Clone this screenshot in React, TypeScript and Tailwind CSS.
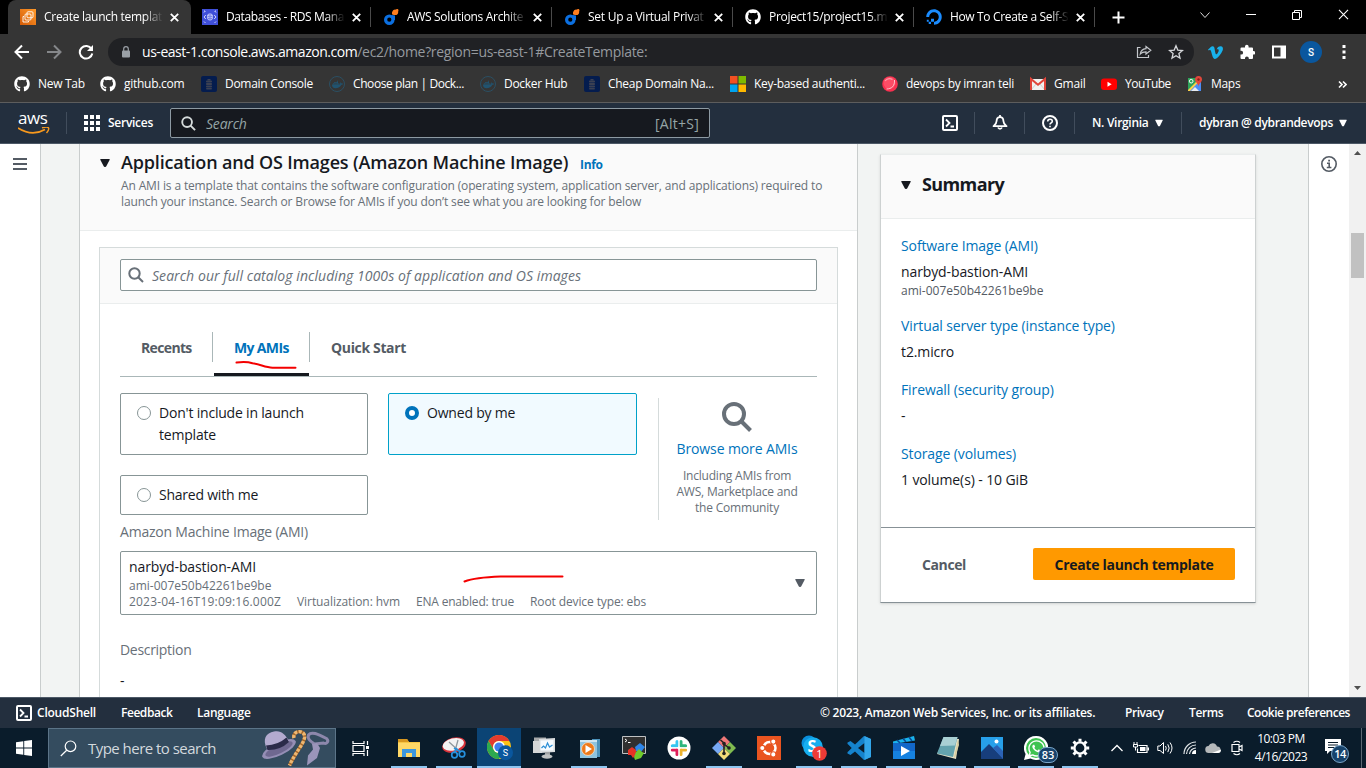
import React from 'react';
import { FaGithub, FaVimeoV, FaDocker, FaDigitalOcean, FaWhatsapp } from 'react-icons/fa';

const Svg = ({ s = 16, vb = '0 0 16 16', children, className = '' }: { s?: number; vb?: string; children: React.ReactNode; className?: string }) => (
  <svg width={s} height={s} viewBox={vb} fill="none" className={`shrink-0 ${className}`}>{children}</svg>
);

/* ---------- favicons ---------- */
const Ec2Icon = () => (
  <Svg>
    <defs><linearGradient id="ec2" x1="0" y1="1" x2="1" y2="0"><stop stopColor="#d45b07" /><stop offset="1" stopColor="#ff9a2b" /></linearGradient></defs>
    <rect width="16" height="16" fill="url(#ec2)" />
    <g stroke="#fff" strokeWidth=".9"><rect x="7" y="2.800" width="6" height="6" rx="1" /><rect x="5" y="5" width="6" height="6" rx="1" /><path d="M4 7.500H3v5.500h5.500v-1" /></g>
  </Svg>
);
const RdsIcon = () => (
  <Svg>
    <rect width="16" height="16" fill="#3f4fd8" />
    <g stroke="#dfe3ff" strokeWidth=".9"><path d="M2 3.500 3.500 2M2 2h1M12.500 2 14 3.500M13 2h1M14 12.500 12.500 14M3.500 14 2 12.500" /><path d="M3.800 6 2 8l1.800 2M12.200 6 14 8l-1.800 2" /><ellipse cx="8" cy="6" rx="2.200" ry="1" /><path d="M5.800 6v4c0 1.300 4.400 1.300 4.400 0V6M5.800 8c0 1.300 4.400 1.300 4.400 0" /></g>
  </Svg>
);
const DIcon = () => (
  <Svg><circle cx="6.300" cy="10.700" r="3.700" stroke="#0b6fe0" strokeWidth="3.200" /><path d="M8.500 6 12 6.500v4.500h-3z" fill="#0b6fe0" /><circle cx="12.300" cy="3.200" r="2.800" fill="#ff7f1f" /><rect x="9" y="2.500" width="3" height="3.300" rx="1" fill="#ff7f1f" /><rect x="13" y="0" width="2.400" height="3" rx="1" fill="#ff7f1f" /></Svg>
);
const ServerIcon = () => (
  <Svg><rect width="16" height="16" rx="2" fill="#041c4e" /><g fill="#3b4052"><rect x="6.500" y="3" width="3" height="1.500" /><rect x="5" y="4.500" width="6" height="2" rx=".8" /><rect x="5" y="7" width="6" height="2" rx=".8" /><rect x="5" y="9.500" width="6" height="2" rx=".8" /><rect x="5" y="12" width="6" height="1.600" rx=".8" /></g></Svg>
);
const DockerIcon = () => (
  <span className="flex size-4 shrink-0 items-center justify-center rounded-full border border-[#2b4f63] text-[#21536f]"><FaDocker size={11} /></span>
);
const MsIcon = () => (
  <Svg><path d="M0 0h7.500v7.500H0z" fill="#f25022" /><path d="M8.500 0H16v7.500H8.500z" fill="#7fba00" /><path d="M0 8.500h7.500V16H0z" fill="#00a4ef" /><path d="M8.500 8.500H16V16H8.500z" fill="#ffb900" /></Svg>
);
const BallIcon = () => (
  <Svg><circle cx="8" cy="8" r="7.800" fill="#f8304f" /><circle cx="7.500" cy="7" r="6" fill="#fb4d66" /><path d="M4.500 13c5 0 8.500-3 8-9" stroke="#ffc2c9" strokeWidth="1" /><path d="M3 5c2-2.500 5-3 7.500-1.500" stroke="#ff9aa7" strokeWidth="1.200" /></Svg>
);
const GmailIcon = () => (
  <Svg><path d="M1 3h14v11H1z" fill="#f1f1f1" /><path d="m1 14 5-6M15 14l-5-6" stroke="#cfcfcf" /><path d="M1 14V3l7 5.800L15 3v11" stroke="#e0443a" strokeWidth="2" /></Svg>
);
const YtIcon = () => (
  <Svg><rect y="2.500" width="16" height="11.500" rx="3" fill="#f00" /><path d="M6.500 5.700v5L10.700 8.200z" fill="#fff" /></Svg>
);
const MapsIcon = () => (
  <Svg><rect x="1" y="2" width="13" height="13" fill="#2fa35a" /><path d="M1 15 14 3v12z" fill="#4c8df6" /><path d="m1 14 11-11 1.500 1L3 15H1z" fill="#fbd24a" /><path d="m4 15 4-4 4 4z" fill="#e8eaed" /><circle cx="4.200" cy="5.200" r="1.800" stroke="#fff" /><path d="M11.500 0a3.500 3.500 0 0 1 3.500 3.500c0 2.500-3 3.500-3.500 7-.5-3.500-3.500-4.500-3.500-7A3.500 3.500 0 0 1 11.500 0z" fill="#e1483c" /><circle cx="11.500" cy="3.500" r="1.200" fill="#8c1f18" /></Svg>
);

const tabs = [
  { icon: <Ec2Icon />, t: 'Create launch templat', active: true, tr: 'tracking-[-0.29px]' },
  { icon: <RdsIcon />, t: 'Databases - RDS Mana', sep: true, tr: 'tracking-[-0.4px]' },
  { icon: <DIcon />, t: 'AWS Solutions Archite', sep: true, tr: 'tracking-[-0.32px]' },
  { icon: <DIcon />, t: 'Set Up a Virtual Privat', sep: true, tr: 'tracking-[-0.25px]' },
  { icon: <FaGithub size={16} />, t: 'Project15/project15.m', sep: true, tr: 'tracking-[-0.3px]' },
  { icon: <FaDigitalOcean size={16} className="text-[#1a8cff]" />, t: 'How To Create a Self-S', sep: true, tr: 'tracking-[-0.35px]' },
];

const X = ({ s = 9, w = 1.8 }: { s?: number; w?: number }) => <Svg s={s} vb="0 0 9 9"><path d="m.8.8 7.400 7.400M8.200.8.8 8.200" stroke="#fff" strokeWidth={w} /></Svg>;

function TabStrip() {
  return (
    <div className="flex h-[34px] bg-black pl-2 text-white">
      {tabs.map((tb, i) => (
        <div key={i} className={`flex h-full shrink-0 items-center ${i === 0 ? 'w-[183px] rounded-t-lg bg-[#353535] pl-3' : 'w-[181px] pl-[11px]'}`}>
          <span className="flex size-4 items-center">{tb.icon}</span>
          <span className={`ml-2 w-[119px] whitespace-nowrap text-[12px] leading-4 [mask-image:linear-gradient(to_right,#000_84%,transparent)] ${tb.tr}`}>{tb.t}</span>
          <span className="ml-[7px] w-[9px]"><X /></span>
          {tb.sep && <span className="ml-auto mr-px h-5 w-px bg-[#4a4a4a]" />}
        </div>
      ))}
      <div className="flex w-[45px] items-center justify-center"><Svg s={13} vb="0 0 13 13"><path d="M6.500.5v12M.5 6.500h12" stroke="#fff" strokeWidth="2" /></Svg></div>
      <div className="ml-auto flex h-[29px] w-[184px] items-center">
        <span className="flex w-[46px] justify-center"><Svg s={10} vb="0 0 10 10"><path d="m.5 2.500 4.500 5 4.500-5" stroke="#ddd" /></Svg></span>
        <span className="flex w-[46px] justify-center"><span className="h-px w-[10px] bg-white" /></span>
        <span className="flex w-[46px] justify-center"><Svg s={10} vb="0 0 10 10"><path d="M.5 2.500h7v7h-7zM2.500 2.500v-2h7v7h-2" stroke="#fff" /></Svg></span>
        <span className="flex w-[46px] justify-center"><X s={11} w={0.9} /></span>
      </div>
    </div>
  );
}

function Toolbar() {
  return (
    <div className="flex h-9 items-center bg-[#353535] text-white">
      <div className="ml-[14px] flex w-[94px] items-center">
        <Svg s={16}><path d="M15 8H2M8 1.500 1.500 8 8 14.500" stroke="#fff" strokeWidth="2" /></Svg>
        <Svg s={16} className="ml-4"><path d="M1 8h13M8 1.500 14.500 8 8 14.500" stroke="#85878a" strokeWidth="2" /></Svg>
        <Svg s={16} className="ml-4"><path d="M13.500 5A6.300 6.300 0 1 0 14.300 9.500" stroke="#fff" strokeWidth="2" /><path d="M15 1v6H9z" fill="#fff" /></Svg>
      </div>
      <div className="flex h-7 w-[1086px] items-center rounded-full bg-[#202124] pl-3 pr-[10px]">
        <Svg s={12} vb="0 0 12 12"><rect x="2" y="4.500" width="8" height="7" rx="1" fill="#9aa0a6" /><path d="M3.700 5V3a2.300 2.300 0 0 1 4.600 0v2" stroke="#9aa0a6" strokeWidth="1.200" /></Svg>
        <span className="ml-[10px] whitespace-nowrap text-[14px] leading-5"><span className="tracking-[-0.46px]">us-east-1.console.aws.amazon.com</span><span className="tracking-[-0.31px] text-[#969a9f]">/ec2/home?region=us-east-1#CreateTemplate:</span></span>
        <Svg s={16} className="ml-auto"><path d="M4.500 3.500H1.500v10h11v-2.500" stroke="#c4c7cb" strokeWidth="1.200" /><path d="M10 2.500 14.800 6.300 10 10V7.800c-3 0-4.500.7-5.700 2.200.4-3 2.200-5 5.700-5.300z" stroke="#c4c7cb" strokeWidth="1.200" /></Svg>
        <Svg s={16} className="ml-4"><path d="m8 1.800 1.800 4.300 4.700.4-3.600 3 1.100 4.600L8 11.700l-4 2.400 1.100-4.600-3.600-3 4.700-.4z" stroke="#d5d7da" strokeWidth="1.300" /></Svg>
      </div>
      <FaVimeoV size={17} className="ml-[13px] text-[#19b1ea]" />
      <Svg s={16} className="ml-[15px]"><path d="M6 2.500a1.800 1.800 0 0 1 3.600 0V3.500h3.400a1 1 0 0 1 1 1V7h.5a1.800 1.800 0 0 1 0 3.600H14V14a1 1 0 0 1-1 1H9.800v-.7a1.900 1.900 0 0 0-3.800 0v.7H2.500a1 1 0 0 1-1-1v-3.400h.7a1.900 1.900 0 0 0 0-3.800h-.7V4.500a1 1 0 0 1 1-1H6z" fill="#fff" /></Svg>
      <Svg s={16} className="ml-4"><path d="M2 2.500h12v11H2z" stroke="#fff" strokeWidth="2" /><path d="M9.500 2h5v12h-5z" fill="#fff" /></Svg>
      <span className="ml-[13px] flex size-[22px] items-center justify-center rounded-full bg-[#0a579e] font-[Roboto] text-[10px] font-medium">S</span>
      <Svg s={4} vb="0 0 4 14" className="ml-5 h-[14px]!"><g fill="#fff"><rect x=".5" y="0" width="3" height="3" /><rect x=".5" y="5.500" width="3" height="3" /><rect x=".5" y="11" width="3" height="3" /></g></Svg>
    </div>
  );
}

const marks = [
  { i: <FaGithub size={16} />, t: 'New Tab', w: 'w-[86px]', tr: 'tracking-[-0.3px]' },
  { i: <FaGithub size={16} />, t: 'github.com', w: 'w-[101px]', tr: 'tracking-[-0.28px]' },
  { i: <ServerIcon />, t: 'Domain Console', w: 'w-[128px]', tr: 'tracking-[-0.29px]' },
  { i: <DockerIcon />, t: 'Choose plan | Dock...', w: 'w-[151px]', tr: 'tracking-[-0.41px]' },
  { i: <DockerIcon />, t: 'Docker Hub', w: 'w-[104px]', tr: 'tracking-[-0.3px]' },
  { i: <ServerIcon />, t: 'Cheap Domain Na...', w: 'w-[146px]', tr: 'tracking-[-0.29px]' },
  { i: <MsIcon />, t: 'Key-based authenti...', w: 'w-[152px]', tr: 'tracking-[-0.31px]' },
  { i: <BallIcon />, t: 'devops by imran teli', w: 'w-[148px]', tr: 'tracking-[-0.26px]' },
  { i: <GmailIcon />, t: 'Gmail', w: 'w-[71px]', tr: 'tracking-[-0.2px]' },
  { i: <YtIcon />, t: 'YouTube', w: 'w-[86px]', tr: 'tracking-[-0.5px]' },
  { i: <MapsIcon />, t: 'Maps', w: 'w-[60px]', tr: 'tracking-[-0.3px]' },
];

function Bookmarks() {
  return (
    <div className="flex h-[33px] border-b border-[#5d5d5d] bg-[#353535] pl-[14px] text-[12px] text-white">
      {marks.map((m, i) => (
        <div key={i} className={`flex h-7 shrink-0 items-center gap-2 ${m.w}`}>{m.i}<span className={`whitespace-nowrap ${m.tr}`}>{m.t}</span></div>
      ))}
      <Svg s={9} vb="0 0 9 9" className="ml-auto mr-[19px] mt-[10px]"><path d="m1 1.500 3 3-3 3M5 1.500l3 3-3 3" stroke="#fff" strokeWidth="1.600" /></Svg>
    </div>
  );
}

const ShellIcon = () => <Svg s={16}><rect x="1" y="1" width="14" height="14" rx="1" stroke="#fff" strokeWidth="2" /><path d="m4 4.500 3.500 3.500L4 11.500M8.500 11.500H12" stroke="#fff" strokeWidth="1.800" /></Svg>;
const Bar = () => <span className="block h-[22px] w-px bg-[#414d5c]" />;
const Caret = ({ className = '' }: { className?: string }) => <Svg s={10} vb="0 0 10 8" className={className}><path d="M.8 0h8.400q.8 0 .5.700L6.300 7.300Q6 8 5.200 8h-.4q-.8 0-1.100-.7L.3.700Q0 0 .8 0z" fill="currentColor" /></Svg>;
const Mag = ({ s, c }: { s: number; c: string }) => <Svg s={s}><circle cx="6.500" cy="6.500" r="5.200" stroke={c} strokeWidth="2" /><path d="m10.200 10.200 4.800 4.800" stroke={c} strokeWidth="2" /></Svg>;

function AwsNav() {
  return (
    <div className="flex h-[41px] items-center border-b border-[#4c5866] bg-[#232f3e] text-white">
      <div className="ml-[18px] flex w-12 flex-col">
        <span className="h-[15px] text-[17px] font-medium leading-[12px] tracking-[-0.4px]">aws</span>
        <svg width="32" height="8" viewBox="0 0 32 8" fill="none"><path d="M0 1q14 9 27 1.500" stroke="#f8991d" strokeWidth="1.800" /><path d="M24 .8c3-.8 6-.8 6.500 0s-.5 3.500-2 5.200" stroke="#f8991d" strokeWidth="1.400" /></svg>
      </div>
      <Bar />
      <svg width="16" height="16" viewBox="0 0 16 16" className="ml-[17px]" fill="#fff">{[0, 6, 12].map(y => [0, 6, 12].map(x => <rect key={`${x}-${y}`} x={x} y={y} width="4" height="4" />))}</svg>
      <span className="ml-2 w-[62px] text-[12px] font-semibold tracking-[-0.27px]">Services</span>
      <div className="flex h-[30px] w-[540px] items-center rounded-[2px] border border-[#8d9aa3] bg-[#16191f] pl-[10px] pr-[10px] text-[14px] text-[#95a5a6]">
        <Mag s={15} c="#d5dbdb" />
        <span className="ml-[10px] italic tracking-[-0.2px]">Search</span>
        <span className="ml-auto tracking-[0.25px]">[Alt+S]</span>
      </div>
      <div className="ml-[232px] flex items-center">
        <ShellIcon />
        <span className="ml-4"><Bar /></span>
        <Svg s={16} className="ml-[17px]"><path d="M8 0v2" stroke="#fff" strokeWidth="1.800" /><path d="M8 2.200C5.600 2.200 4.600 4 4.600 6 4.600 8.500 3 9.800 1.500 11.200h13C13 9.800 11.400 8.500 11.400 6c0-2-1-3.800-3.400-3.800zM6 12.500a2.200 2.200 0 0 0 4 0" stroke="#fff" strokeWidth="1.800" strokeLinejoin="round" /></Svg>
        <span className="ml-4"><Bar /></span>
        <Svg s={16} className="ml-[17px]"><circle cx="8" cy="8" r="7" stroke="#fff" strokeWidth="2" /><path d="M5.700 6.500C5.700 3.500 10.300 3.500 10.300 6.300 10.300 8 8 7.800 8 9.600M8 10.700v1.600" stroke="#fff" strokeWidth="1.600" /></Svg>
        <span className="ml-4"><Bar /></span>
        <span className="ml-[17px] w-[57px] whitespace-nowrap text-[12px] font-semibold tracking-[-0.3px]">N. Virginia</span>
        <Caret className="ml-[6px] w-2!" />
        <span className="ml-[18px]"><Bar /></span>
        <span className="ml-[17px] w-[134px] whitespace-nowrap text-[12px] font-semibold tracking-[-0.32px]">dybran @ dybrandevops</span>
        <Caret className="ml-[6px] w-2!" />
      </div>
    </div>
  );
}

const Radio = ({ on }: { on?: boolean }) => on
  ? <span className="mt-1 size-[14px] shrink-0 rounded-full border-[4px] border-[#0073bb] bg-white" />
  : <span className="mt-1 size-[14px] shrink-0 rounded-full border border-[#879596] bg-white" />;

function ImagesCard() {
  return (
    <section className="relative h-[553px] w-[779px] overflow-hidden border-x border-[#c9cdcd] bg-white">
      <header className="flex h-[87px] border-b border-[#eaeded] bg-[#fafafa] pl-5">
        <Caret className="mt-[14px] w-[10px]! text-[#16191f]" />
        <div className="ml-[11px]">
          <div className="flex items-baseline pt-[6px] leading-6">
            <h2 className="w-[459px] whitespace-nowrap text-[18px] font-semibold tracking-[-0.17px] text-[#16191f]">Application and OS Images (Amazon Machine Image)</h2>
            <span className="text-[12px] font-bold tracking-[-0.3px] text-[#0073bb]">Info</span>
          </div>
          <p className="mt-px whitespace-nowrap text-[12px] leading-4 tracking-[-0.14px] text-[#687078]">An AMI is a template that contains the software configuration (operating system, application server, and applications) required to<br />launch your instance. Search or Browse for AMIs if you don’t see what you are looking for below</p>
        </div>
      </header>
      <div className="ml-[19px] mt-4 w-[739px] border border-[#d5dbdb] text-[14px]">
        <div className="h-14 border-b border-[#eaeded] bg-[#fafafa] px-5 pt-[11px]">
          <div className="flex h-8 items-center rounded-[2px] border border-[#879596] bg-white pl-[7px]">
            <Mag s={16} c="#687078" />
            <span className="ml-2 italic tracking-[0.06px] text-[#687078]">Search our full catalog including 1000s of application and OS images</span>
          </div>
        </div>
        <div className="h-[420px] px-5">
          <div className="flex h-[73px] items-end border-b border-[#aab7b8] font-bold text-[#545b64]">
            <span className="flex h-[44px] w-[93px] items-start border-[#aab7b8] pl-[21px]"><span className="mt-[6px] leading-5 tracking-[-0.65px]">Recents</span><span className="ml-auto h-[30px] w-px bg-[#aab7b8]" /></span>
            <span className="ml-px flex h-[44px] w-[95px] border-b-[3px] border-[#16191f] pl-5 text-[#0073bb]"><span className="mt-[6px] whitespace-nowrap leading-5 tracking-[-0.65px]">My AMIs</span></span>
            <span className="flex h-[44px] items-start"><span className="h-[30px] w-px bg-[#aab7b8]" /><span className="ml-[21px] mt-[6px] leading-5 tracking-[-0.35px]">Quick Start</span></span>
          </div>
          <div className="mt-4 flex text-[#16191f]">
            <div className="grid w-[517px] grid-cols-[248px_249px] grid-rows-[62px_40px] gap-5 leading-[22px]">
              <div className="flex gap-2 rounded-[2px] border border-[#879596] pl-4 pt-2"><Radio /><span className="w-[170px] tracking-[-0.2px]">Don't include in launch template</span></div>
              <div className="flex gap-2 rounded-[2px] border border-[#00a1c9] bg-[#f1faff] pl-4 pt-2"><Radio on /><span className="tracking-[-0.2px]">Owned by me</span></div>
              <div className="flex gap-2 rounded-[2px] border border-[#879596] pl-4 pt-2"><Radio /><span className="tracking-[-0.23px]">Shared with me</span></div>
            </div>
            <div className="ml-[21px] mt-[5px] flex h-[122px] w-[157px] flex-col items-center border-l border-[#d5dbdb] pt-1">
              <svg width="30" height="30" viewBox="0 0 30 30" fill="none"><circle cx="12" cy="12" r="10" stroke="#687078" strokeWidth="4" /><path d="m19 19 9.500 9.500" stroke="#687078" strokeWidth="4" /></svg>
              <span className="mt-[6px] leading-[22px] tracking-[-0.12px] text-[#0073bb]">Browse more AMIs</span>
              <span className="mt-2 w-[130px] text-center text-[12px] leading-4 tracking-[-0.2px] text-[#687078]">Including AMIs from AWS, Marketplace and the Community</span>
            </div>
          </div>
          <div className="mt-[1px] leading-[22px] tracking-[-0.21px] text-[#687078]">Amazon Machine Image (AMI)</div>
          <div className="mt-2 flex h-16 items-center rounded-[2px] border border-[#879596] pl-2 pr-[11px]">
            <div>
              <div className="leading-[22px] tracking-[-0.12px] text-[#16191f]">narbyd-bastion-AMI</div>
              <div className="text-[12px] leading-4 text-[#687078]">ami-007e50b42261be9be</div>
              <div className="flex gap-4 whitespace-nowrap text-[12px] leading-4 text-[#687078]">
                <span className="w-[152px] tracking-[0.2px]">2023-04-16T19:09:16.000Z</span><span className="w-[103px] tracking-[-0.07px]">Virtualization: hvm</span><span className="w-[98px] tracking-[-0.19px]">ENA enabled: true</span><span className="tracking-[-0.11px]">Root device type: ebs</span>
              </div>
            </div>
            <Caret className="ml-auto text-[#545b64]" />
          </div>
          <div className="mt-6 leading-[22px] tracking-[-0.3px] text-[#687078]">Description</div>
          <div className="mt-[9px] leading-[22px] text-[#16191f]">-</div>
        </div>
      </div>
      {/* pen marks */}
      <svg className="absolute left-0 top-0" width="777" height="553" fill="none" stroke="#f40000" strokeWidth="2" strokeLinecap="round"><path d="M156.500 218.500c6-.8 12-.6 16 .8 8 1.200 13 4.200 20 4.400h23" /><path d="M384.500 437.500c9-3.500 22-4.500 36-5h62" /></svg>
    </section>
  );
}

const summary = [
  { l: 'Software Image (AMI)', v: 'narbyd-bastion-AMI', s: 'ami-007e50b42261be9be' },
  { l: 'Virtual server type (instance type)', v: 't2.micro' },
  { l: 'Firewall (security group)', v: '-' },
  { l: 'Storage (volumes)', v: '1 volume(s) - 10 GiB' },
];

function Summary() {
  return (
    <aside className="ml-[22px] mt-[10px] h-[449px] w-[376px] border border-t-[#eaeded] border-x-[#cdd1d1] border-b-[#879196] bg-white text-[14px] shadow-sm">
      <header className="flex h-[64px] items-center border-b border-[#eaeded] bg-[#fafafa] pl-5 pb-1">
        <Caret className="w-[10px]! text-[#16191f]" /><h2 className="ml-[11px] text-[18px] font-bold tracking-[-0.6px] text-[#16191f]">Summary</h2>
      </header>
      <div className="h-[309px] border-b border-[#879196] px-5 pt-4 leading-[22px] tracking-[-0.11px]">
        {summary.map(x => (
          <div key={x.l} className="mb-4">
            <div className="text-[#0073bb]">{x.l}</div>
            <div className="mt-1 text-[#16191f]">{x.v}</div>
            {x.s && <div className="text-[12px] leading-4 tracking-normal text-[#545b64]">{x.s}</div>}
          </div>
        ))}
      </div>
      <div className="flex h-[72px] items-center justify-between pl-[41px] pr-[20px] font-bold">
        <span className="tracking-[-0.39px] text-[#545b64]">Cancel</span>
        <span className="flex h-8 w-[202px] items-center justify-center rounded-[2px] bg-[#ff9900] tracking-[-0.28px] text-[#16191f]">Create launch template</span>
      </div>
    </aside>
  );
}

function Content() {
  return (
    <main className="flex h-[553px] overflow-hidden bg-[#f2f4f3]">
      <div className="w-[41px] shrink-0 border-r border-[#c9cdcd] bg-white pl-[13px] pt-[13px]"><Svg s={14} vb="0 0 14 12"><path d="M0 1h14M0 6h14M0 11h14" stroke="#545b64" strokeWidth="2" /></Svg></div>
      <div className="ml-[38px]"><ImagesCard /></div>
      <Summary />
      <div className="ml-auto w-[41px] border-l border-[#c9cdcd] bg-white pl-3 pt-3">
        <Svg s={16}><circle cx="8" cy="8" r="7.200" stroke="#545b64" strokeWidth="1.600" /><path d="M6 7.200h2.200V11.500M5.800 11.500h4.600M7.200 4.600h1.800" stroke="#545b64" strokeWidth="1.600" /></Svg>
      </div>
      <div className="flex w-[17px] flex-col items-center justify-between bg-[#f1f1f1] py-[7px]">
        <Svg s={7} vb="0 0 7 4" className="h-1!"><path d="M0 4h7L3.500 0z" fill="#505050" /></Svg>
        <span className="-mt-[331px] h-[45px] w-[13px] bg-[#c1c1c1]" />
        <Svg s={7} vb="0 0 7 4" className="h-1!"><path d="M0 0h7L3.500 4z" fill="#505050" /></Svg>
      </div>
    </main>
  );
}

function AwsFooter() {
  return (
    <footer className="flex h-[31px] items-center border-t border-[#4c5866] bg-[#232f3e] pl-4 text-[12px] font-semibold text-white">
      <ShellIcon />
      <span className="ml-[5px] w-[84px] tracking-[-0.22px]">CloudShell</span>
      <span className="w-[76px] tracking-[-0.45px]">Feedback</span>
      <span className="tracking-[-0.3px]">Language</span>
      <span className="ml-auto w-[305px] whitespace-nowrap tracking-[-0.27px]">© 2023, Amazon Web Services, Inc. or its affiliates.</span>
      <span className="w-16 tracking-[-0.45px]">Privacy</span>
      <span className="w-[58px] tracking-[-0.4px]">Terms</span>
      <span className="w-[119px] whitespace-nowrap tracking-[-0.49px]">Cookie preferences</span>
    </footer>
  );
}

/* ---------- taskbar drawings (24 x 24) ---------- */
const T = ({ children }: { children: React.ReactNode }) => <Svg s={24} vb="0 0 24 24">{children}</Svg>;
const Explorer = () => <T><path d="M1 3h9l2 3h11v15H1z" fill="#f6c544" /><path d="M1 3h9l2 3H1z" fill="#d8971f" /><path d="M1 7h22v14H1z" fill="#ffd866" /><path d="M5 21v-8h14v8h-4v-4H9v4z" fill="#3b96dd" /></T>;
const Snip = () => <T><ellipse cx="12" cy="9" rx="12" ry="7.500" transform="rotate(-14 12 9)" fill="#d9333a" /><ellipse cx="11.500" cy="8.200" rx="10.800" ry="6" transform="rotate(-14 12 9)" fill="#f3f3f3" /><path d="m7 6 10 9M16 4l-3 11" stroke="#8f989c" strokeWidth="1.300" /><path d="m12 12 7 4M15 12l-3 5" stroke="#2590dd" strokeWidth="1.500" /><circle cx="12.500" cy="19" r="2.800" stroke="#2590dd" strokeWidth="1.700" /><circle cx="20" cy="18" r="2.800" stroke="#2590dd" strokeWidth="1.700" /></T>;
const Chrome = () => (
  <Svg s={26} vb="0 0 26 26">
    <circle cx="12" cy="12" r="12" fill="#fbc116" /><path d="M1.600 6A12 12 0 0 1 22.400 6H12a6 6 0 0 0-5.200 9z" fill="#e33b2e" /><path d="M1.600 6A12 12 0 0 0 12 24l5.200-9a6 6 0 0 1-10.400 0z" fill="#2da94f" /><circle cx="12" cy="12" r="6" fill="#fff" /><circle cx="12" cy="12" r="4.600" fill="#3f7fee" />
    <circle cx="18.500" cy="17.800" r="7.500" fill="#0a579e" /><text x="18.500" y="21" fontSize="9" fill="#fff" textAnchor="middle" fontFamily="Roboto">S</text>
  </Svg>
);
const Monitor = () => <T><path d="M2 1.500h12v13H2z" fill="#a7a9aa" /><path d="M1 5h9v12H1z" fill="#d6d7d7" /><path d="m7 3 16-1v14l-15 1z" fill="#d9dcde" /><path d="M8.500 4.500 21.500 4v10.500h-13z" fill="#f6fbff" /><path d="m9.500 12 2-2 2 2 2-5 2 4 3-2" stroke="#2b8fd6" strokeWidth="1.200" /><path d="M13 16h5v4h-5z" fill="#9fa2a4" /><ellipse cx="15" cy="20.500" rx="5.500" ry="2.200" fill="#bfc2c3" /></T>;
const Media = () => <T><path d="M15 3h8v18h-8z" fill="#4d93bb" /><path d="M3 4h17v18H3z" fill="#8fc4df" /><path d="M3 4h17v2H3z" fill="#cfe7f3" /><circle cx="11" cy="13" r="6.500" fill="#ee7a1a" stroke="#fbe0c4" strokeWidth=".8" /><path d="m8.500 9 6.500 4-6.500 4z" fill="#fff" /></T>;
const Moba = () => <T><path d="M.5.5h23v17H.5z" fill="#303030" stroke="#bfc1c3" /><path d="m3 3 2 1.500L3 6M6 6.500h2.500" stroke="#fff" /><path d="m6 14 4-3 4 3 1 4-4 4-2-3-3 0z" fill="#e63326" /><path d="m13 11 5-4 5 4-4 5-5-1z" fill="#2f86e8" /><path d="m14 16 3-3 3 3 2 1-3 5-6 2-1-3z" fill="#6fca2c" /></T>;
const Slack = () => <T><circle cx="12" cy="12" r="11.500" fill="#fff" /><g strokeWidth="3" strokeLinecap="round"><path d="M10 5.500v4.200M5.300 9.800h4.400" stroke="#36c5f0" /><path d="M14 9.700V5.500M14.200 9.800h4.400" stroke="#2eb67d" /><path d="M14 14v4.600M14.200 14h4.400" stroke="#ecb22e" /><path d="M10 14v4.600M9.800 14H5.300" stroke="#e01e5a" /></g><path d="M12 4v16M4 12h16" stroke="#fff" /></T>;
const Git = () => <T><path d="m12 0 6 6-6 6-6-6z" fill="#ee7777" /><path d="m18 6 6 6-6 6-6-6z" fill="#80bb50" /><path d="m6 6 6 6-6 6-6-6z" fill="#78a9f5" /><path d="m12 12 6 6-6 6-6-6z" fill="#f3dc79" /><path d="M8.500 4 12 7v11M12 8l5 4" stroke="#222" strokeWidth="1.600" /><circle cx="12" cy="7.500" r="1.800" fill="#222" /><circle cx="17" cy="12" r="1.800" fill="#222" /><circle cx="12" cy="17.500" r="1.800" fill="#222" /></T>;
const Ubuntu = () => <T><path d="M0 0h24v24H0z" fill="#e95420" /><circle cx="12.500" cy="12" r="6" stroke="#fff" strokeWidth="2.500" /><g fill="#fff" stroke="#e95420" strokeWidth="1.100"><circle cx="5.300" cy="12" r="2.600" /><circle cx="16.300" cy="5.600" r="2.600" /><circle cx="16.300" cy="18.400" r="2.600" /></g></T>;
const Skype = () => <Svg s={26} vb="0 0 26 26"><circle cx="8" cy="8" r="7.500" fill="#0a8fdb" /><circle cx="15" cy="15" r="7.500" fill="#0a8fdb" /><circle cx="12" cy="12" r="9.800" fill="#16aef0" /><text x="11" y="17" fontSize="16" fontWeight="700" fill="#fff" textAnchor="middle" fontFamily="Open Sans">S</text><circle cx="18.500" cy="18.500" r="7.300" fill="#ef3b36" /><text x="18.500" y="22.500" fontSize="11" fill="#fff" textAnchor="middle" fontFamily="Open Sans">1</text></Svg>;
const VsCode = () => <T><path d="M17 0 24 3v18l-7 3-9-8.500L3.500 19 .5 17.500V16l4-4-4-4V6.500L3.500 5 8 8.500z" fill="#1583cd" /><path d="M17.500 7 11 12l6.500 5z" fill="#0a1c2b" /><path d="M.5 8v8l4-4z" fill="#0a1c2b" /><path d="M17.500 0 24 3v18l-6.500 3z" fill="#32a6ea" /></T>;
const Movies = () => <T><path d="M1 5.500 22 0l1 4.500L1 8z" fill="#19b3ee" /><path d="M1 7h22v16H1z" fill="#1267c9" /><path d="M1 15h22v8H1z" fill="#1682e0" /><path d="m5 4 3 3M11 2.500 14 6M17 1l3 4" stroke="#0a4a94" strokeWidth="1.600" /><path d="m9 10 9 5-9 5z" fill="#fff" /></T>;
const Notepad = () => <T><path d="m9 2 14 1-3 20L1 18z" fill="#e9e3c8" /><path d="M7.500 1h14L17 21 1 17.500z" fill="#63a3ae" /><path d="M7.500 1h14L19 9.500 4 10z" fill="#a9d0d4" /><path d="m18 21 4-18 1 6-4 13z" fill="#d8cda0" /></T>;
const Photos = () => <T><path d="M1 1h22v22H1z" fill="#27a0ea" /><path d="m1 16 8-8 14 14v1H1z" fill="#173e7c" /><path d="m13 12 4-3 6 6v8z" fill="#2b62b5" /><circle cx="16.500" cy="5.500" r="2" fill="#fff" /></T>;
const Whats = () => <span className="relative flex size-6 items-center justify-center"><svg width="24" height="24" viewBox="0 0 24 24"><path d="M12 0a12 12 0 1 1-5.500 22.500L0 24l1.600-6A12 12 0 0 1 12 0z" fill="#fff" /><circle cx="12" cy="12" r="10" fill="#3fc351" /></svg><FaWhatsapp size={19} className="absolute text-white" /><span className="absolute left-[14px] top-[11px] flex h-[16px] w-[20px] items-center justify-center rounded-full border border-[#7aa5c8] bg-[#17436b] text-[11px] font-semibold text-white">83</span></span>;
const Gear = () => <Svg s={20} vb="0 0 20 20"><circle cx="10" cy="10" r="5.600" stroke="#fff" strokeWidth="2.400" /><g stroke="#fff" strokeWidth="3"><path d="M10 .8v3M10 16.200v3M.8 10h3M16.200 10h3M3.500 3.500l2.100 2.100M14.400 14.400l2.100 2.100M16.500 3.500l-2.100 2.100M5.600 14.400l-2.100 2.100" /></g></Svg>;

const apps: { e: React.ReactNode; u?: boolean; a?: boolean }[] = [
  { e: <Explorer />, u: true }, { e: <Snip />, u: true }, { e: <Chrome />, a: true }, { e: <Monitor /> }, { e: <Media />, u: true }, { e: <Moba /> }, { e: <Slack /> }, { e: <Git />, u: true }, { e: <Ubuntu /> }, { e: <Skype />, u: true }, { e: <VsCode />, u: true }, { e: <Movies />, u: true }, { e: <Notepad />, u: true }, { e: <Photos />, u: true }, { e: <Whats />, u: true }, { e: <Gear />, u: true },
];

function HatCaneTie() {
  return (
    <svg width="70" height="38" viewBox="0 0 70 38" fill="none">
      <ellipse cx="18" cy="20" rx="18.500" ry="6.500" transform="rotate(-26 18 20)" fill="#958eb5" />
      <ellipse cx="18" cy="20" rx="15" ry="4.500" transform="rotate(-26 18 20)" fill="#6f6890" />
      <path d="M6 20C1 10 5 4 13 2.500 20 1 24 5 28 12q-8 9-22 8z" fill="#b3abcf" />
      <path d="M5 16.500Q17 16 25.500 8.500l2.500 4.500Q19 21.500 6.500 21z" fill="#2b2b49" />
      <path d="M33 9c-2-8 12-9 10.500 0C42 16 34 24 28.500 36.500" stroke="#a8692a" strokeWidth="3.400" /><path d="M33 9c-2-8 12-9 10.500 0C42 16 34 24 28.500 36.500" stroke="#edb773" strokeWidth="3.400" strokeDasharray="3 1.500" />
      <path d="M47.500 6c3-4 9-1 18 3.500 3 3 0 6-3 4.500l-9 1q-8-5-6-9z" stroke="#8d88ac" strokeWidth="3" /><path d="m51 15 5-1 3 5-3 10-10 7.500 1-10 5-6z" fill="#9b95ba" />
    </svg>
  );
}

const Tray = ({ children }: { children: React.ReactNode }) => <span className="flex w-6 justify-center">{children}</span>;

function Taskbar() {
  return (
    <div className="flex h-10 items-center bg-[#0a1c2b] text-white">
      <span className="flex w-12 justify-center"><Svg s={16}><path d="M0 2.300 7.300 1.200v6.300H0zM8.200 1 16 0v7.500H8.200zM0 8.500h7.300v6.300L0 13.700zM8.200 8.500H16V16l-7.800-1z" fill="#fff" /></Svg></span>
      <div className="flex h-full w-[288px] items-center border border-[#5b7488] bg-[#344c5f] pl-[11px] pr-1">
        <Svg s={17} vb="0 0 17 17"><circle cx="10.500" cy="6.300" r="5.300" stroke="#fff" strokeWidth="1.200" /><path d="M6.700 10.200.8 16" stroke="#fff" strokeWidth="1.200" /></Svg>
        <span className="ml-[11px] whitespace-nowrap text-[15px] tracking-[-0.53px] text-[#d3d9de]">Type here to search</span>
        <span className="ml-auto"><HatCaneTie /></span>
      </div>
      <span className="flex w-[50px] items-center justify-center pr-px"><Svg s={17} vb="0 0 17 17"><path d="M1 1v2.500h11V1M1 16v-2.500h11V16M1 5.500h11v6H1zM15.500 1v4M15.500 10v6" stroke="#fff" strokeWidth="1.200" /><path d="M14 6h3v3h-3z" fill="#fff" /></Svg></span>
      {apps.map((x, i) => (
        <span key={i} className={`flex h-full flex-col items-center ${i > 11 ? 'w-[44px]' : 'w-[45px]'}`}>
          <span className={`flex h-[38px] items-center justify-center pt-[2px] ${x.a ? 'w-[44px] bg-[#0b4475] pl-[2px]' : 'w-9'}`}>{x.e}</span>
          <span className={`h-[2px] ${x.a ? 'w-[44px] bg-[#8ec5f0]' : x.u ? 'w-9 bg-[#8ec5f0]' : 'w-0'}`} />
        </span>
      ))}
      <div className="ml-[3px] flex items-center">
        <Tray><Svg s={12} vb="0 0 12 12"><path d="m.5 9 5.500-5.500L11.500 9" stroke="#fff" strokeWidth="1.300" /></Svg></Tray>
        <Tray><Svg><path d="M5.500 5.500H14v7H4.500v-4" stroke="#fff" strokeWidth="1.200" /><path d="M7 7h5.500v4H7zM14.500 7.500H16v3h-1.500z" fill="#fff" /><path d="M1 2v3M4 2v3M.5 4.500h4V7h-4zM2.500 7v3.500" stroke="#fff" /></Svg></Tray>
        <Tray><Svg><path d="M.8 6v4.500H3L6.500 13.500v-11L3 6z" stroke="#fff" /><path d="M8.500 6q1.500 2 0 4.500M10.800 4.300q2.700 3.700 0 7.800M13 2.500q4 5.500 0 11" stroke="#fff" /></Svg></Tray>
        <Tray><Svg s={14} vb="0 0 14 14" className="ml-px"><path d="M1 13A12 12 0 0 1 13 1M3.500 13A9.500 9.500 0 0 1 13 4M6.500 13A6.500 6.500 0 0 1 13 7" stroke="#e0e4e7" strokeWidth="1.200" /><path d="M9 13a4 4 0 0 1 4-4v4z" fill="#fff" /></Svg></Tray>
        <Tray><Svg><path d="M4 13a3.500 3.500 0 0 1-.5-7A4.500 4.500 0 0 1 12 6.500 3.300 3.300 0 0 1 13 13z" fill="#b5b8ba" /><path d="M7 13 16 9.500Q16 13 13 13z" fill="#fff" /></Svg></Tray>
        <Tray><Svg><path d="M3 4.500h7v7H3zM10 7l3-1.500v5L10 9M4.500 2.500Q8 0 11 2.500M4.500 13.500Q8 16 11 13.500" stroke="#fff" strokeWidth="1.200" /></Svg></Tray>
      </div>
      <div className="ml-[3px] w-[58px] text-center text-[12px] leading-[18px] tracking-[-0.5px]"><div>10:03 PM</div><div>4/16/2023</div></div>
      <div className="relative ml-[15px]">
        <svg width="26" height="24" viewBox="0 0 26 24"><path d="M0 3h16v12H5l-3 3v-3H0z" fill="#fff" /><path d="M3 6.500h10M3 9h10M3 11.500h7" stroke="#0a1c2b" /></svg>
        <span className="absolute left-[6px] top-[9px] flex size-[18px] items-center justify-center rounded-full border border-[#7aa5c8] bg-[#17436b] text-[11px] font-semibold tracking-[-0.5px]">14</span>
      </div>
      <span className="ml-auto mr-[4px] h-full w-px bg-[#5b6873]" />
    </div>
  );
}

export default function App() {
  return (
    <div className="h-[768px] w-[1366px] overflow-hidden font-['Open_Sans','Noto_Sans',sans-serif]">
      <TabStrip />
      <Toolbar />
      <Bookmarks />
      <AwsNav />
      <Content />
      <AwsFooter />
      <Taskbar />
    </div>
  );
}
